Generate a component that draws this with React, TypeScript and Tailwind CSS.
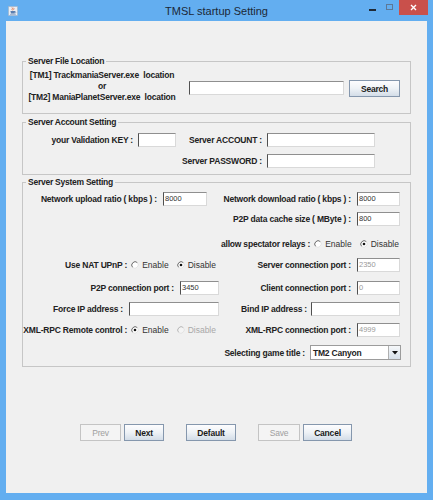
import React from "react";

const LBLBASE = "text-[8.5px] font-bold tracking-[-0.2px] text-[#222] whitespace-nowrap";
const LBL = `${LBLBASE} leading-[12px]`;

function TextField({ className = "", value = "", dim = false }: { className?: string; value?: string; dim?: boolean }) {
  return (
    <div
      className={`h-[14px] shrink-0 bg-white border border-t-[#8f8f8f] border-l-[#505050] border-r-[#d9d9d9] border-b-[#d9d9d9] pl-[1px] pt-[1px] text-[7.5px] leading-[9px] ${
        dim ? "text-[#9a9a9a]" : "text-[#333]"
      } ${className}`}
    >
      {value}
    </div>
  );
}

function Radio({ checked = false, disabled = false }: { checked?: boolean; disabled?: boolean }) {
  return (
    <svg width="8" height="8" viewBox="0 0 8 8" className="shrink-0">
      <circle cx="4" cy="4" r="3.4" fill={disabled ? "#f4f4f4" : "#ffffff"} />
      <path d="M1.6 6.4 A3.4 3.4 0 0 1 6.4 1.6" stroke={disabled ? "#b5b5b5" : "#6a6a6a"} strokeWidth="1" fill="none" />
      <path d="M6.4 1.6 A3.4 3.4 0 0 1 1.6 6.4" stroke="#e2e2e2" strokeWidth="1" fill="none" />
      {checked && <circle cx="4" cy="4" r="1.3" fill="#111" />}
    </svg>
  );
}

function RadioPair({ first, secondDisabled = false }: { first: boolean; secondDisabled?: boolean }) {
  return (
    <div className="flex items-center ml-[4px]">
      <Radio checked={first} />
      <span className="ml-[3px] text-[8.5px] leading-[12px] text-[#333]">Enable</span>
      <span className="ml-[8px] flex items-center">
        <Radio checked={!first} disabled={secondDisabled} />
      </span>
      <span className={`ml-[3px] text-[8.5px] leading-[12px] ${secondDisabled ? "text-[#a8a8a8]" : "text-[#333]"}`}>Disable</span>
    </div>
  );
}

function Btn({ children, className = "", disabled = false }: { children: React.ReactNode; className?: string; disabled?: boolean }) {
  return (
    <div
      className={`h-[17px] shrink-0 flex items-center justify-center border text-[8.5px] leading-[12px] tracking-[-0.2px] ${
        disabled
          ? "border-[#c4c4c4] bg-[#f4f4f4] text-[#a0a0a0]"
          : "border-[#8597ad] bg-linear-to-b from-[#fdfdfe] via-[#eef2f6] to-[#d3dde8] text-[#1a1a1a] font-bold"
      } ${className}`}
    >
      {children}
    </div>
  );
}

function Legend({ children }: { children: React.ReactNode }) {
  return (
    <legend className="ml-[3px] px-[2px] text-[8.5px] font-bold tracking-[-0.25px] leading-[12px] text-[#222]">{children}</legend>
  );
}

function SysRow({
  mt,
  left,
  right,
  leftPad = "pr-[3px]",
  rightPad = "pr-[10px]",
  h = "h-[14px]",
}: {
  mt: string;
  left?: React.ReactNode;
  right?: React.ReactNode;
  leftPad?: string;
  rightPad?: string;
  h?: string;
}) {
  return (
    <div className={`flex ${h} ${mt}`}>
      <div className={`w-[199px] flex justify-end items-center ${leftPad}`}>{left}</div>
      <div className={`w-[188px] flex justify-end items-center ${rightPad}`}>{right}</div>
    </div>
  );
}

function JavaIcon() {
  return (
    <svg width="10" height="10" viewBox="0 0 10 10">
      <rect x="0.5" y="0.5" width="9" height="9" fill="#e9eef4" stroke="#9fb3c8" strokeWidth="0.6" />
      <path d="M4 1.5 C5.5 2.5 3 3.3 4.6 4.4" stroke="#e0602a" strokeWidth="0.8" fill="none" />
      <path d="M5.6 1.8 C6.6 2.6 5 3.2 6 4" stroke="#e0602a" strokeWidth="0.7" fill="none" />
      <path d="M2.4 5 L7.2 5 L6.6 7.6 L3 7.6 Z" fill="#5a7fb0" />
      <path d="M7.2 5.6 C8.4 5.6 8.2 7 6.8 7" stroke="#5a7fb0" strokeWidth="0.6" fill="none" />
      <path d="M2 8.3 L7.8 8.3" stroke="#5a7fb0" strokeWidth="0.6" />
    </svg>
  );
}

export default function App() {
  return (
    <div className="w-[433px] h-[500px] bg-[#63aef0] flex flex-col font-['Liberation_Sans',Arial,sans-serif]">
      {/* title bar */}
      <div className="h-[21px] shrink-0 grid grid-cols-[1fr_auto_1fr]">
        <div className="flex items-start pl-[8px] pt-[6px]">
          <JavaIcon />
        </div>
        <div className="pt-[4px] text-[11px] leading-[14px] text-[#1c2836]">TMSL startup Setting</div>
        <div className="flex items-start justify-end pr-[5px]">
          <div className="mt-[9px] w-[7px] h-[2px] bg-[#1f2a36]" />
          <div className="ml-[10px] mt-[4px] w-[7px] h-[6px] border border-[#5d7896]" />
          <div className="ml-[6px] w-[29px] h-[15px] bg-[#c9504b] flex items-center justify-center">
            <svg width="7" height="7" viewBox="0 0 7 7">
              <path d="M1 1 L6 6 M6 1 L1 6" stroke="#ffffff" strokeWidth="1.4" />
            </svg>
          </div>
        </div>
      </div>

      {/* content */}
      <div className="ml-[6px] w-[421px] h-[472px] shrink-0 bg-[#f0f0f0] flex flex-col">
        {/* Server File Location */}
        <fieldset className="ml-[16px] w-[389px] mt-[34px] border border-[#c6c6c6] pb-[7px]">
          <Legend>Server File Location</Legend>
          <div className="flex items-start mt-[3px]">
            <div className={`ml-[5px] w-[148px] h-[36px] flex flex-col items-center ${LBLBASE} leading-[11px]`}>
              <div>[TM1] TrackmaniaServer.exe&nbsp; location</div>
              <div>or</div>
              <div>[TM2] ManiaPlanetServer.exe&nbsp; location</div>
            </div>
            <TextField className="ml-[13px] mt-[11px] w-[155px]" />
            <Btn className="ml-[5px] mt-[10px] w-[51px]">Search</Btn>
          </div>
        </fieldset>

        {/* Server Account Setting */}
        <fieldset className="ml-[16px] w-[389px] mt-[2px] border border-[#c6c6c6] pb-[6px]">
          <Legend>Server Account Setting</Legend>
          <div className="flex items-center h-[14px] mt-[5px]">
            <div className={`w-[110px] flex justify-end ${LBL}`}>your Validation KEY :</div>
            <TextField className="ml-[5px] w-[38px]" />
            <div className={`w-[86px] flex justify-end ${LBL}`}>Server ACCOUNT :</div>
            <TextField className="ml-[5px] w-[108px]" />
          </div>
          <div className="flex items-center h-[14px] mt-[7px]">
            <div className={`w-[239px] flex justify-end ${LBL}`}>Server PASSWORD :</div>
            <TextField className="ml-[5px] w-[108px]" />
          </div>
        </fieldset>

        {/* Server System Setting */}
        <fieldset className="ml-[16px] w-[389px] mt-[1px] border border-[#c6c6c6] pb-[6px]">
          <Legend>Server System Setting</Legend>
          <SysRow
            mt="mt-[4px]"
            leftPad="pr-[15px]"
            left={
              <>
                <span className={LBL}>Network upload ratio ( kbps ) :</span>
                <TextField className="ml-[6px] w-[44px]" value="8000" />
              </>
            }
            right={
              <>
                <span className={LBL}>Network download ratio ( kbps ) :</span>
                <TextField className="ml-[6px] w-[43px]" value="8000" />
              </>
            }
          />
          <SysRow
            mt="mt-[6px]"
            right={
              <>
                <span className={LBL}>P2P data cache size ( MByte ) :</span>
                <TextField className="ml-[6px] w-[43px]" value="800" />
              </>
            }
          />
          <SysRow
            mt="mt-[11px]"
            rightPad="pr-[11px]"
            right={
              <>
                <span className={LBL}>allow spectator relays :</span>
                <RadioPair first={false} />
              </>
            }
          />
          <SysRow
            mt="mt-[7px]"
            leftPad="pr-[6px]"
            left={
              <>
                <span className={LBL}>Use NAT UPnP :</span>
                <RadioPair first={false} />
              </>
            }
            right={
              <>
                <span className={LBL}>Server connection port :</span>
                <TextField className="ml-[6px] w-[43px]" value="2350" dim />
              </>
            }
          />
          <SysRow
            mt="mt-[9px]"
            left={
              <>
                <span className={LBL}>P2P connection port :</span>
                <TextField className="ml-[6px] w-[39px]" value="3450" />
              </>
            }
            right={
              <>
                <span className={LBL}>Client connection port :</span>
                <TextField className="ml-[6px] w-[43px]" value="0" dim />
              </>
            }
          />
          <SysRow
            mt="mt-[7px]"
            left={
              <>
                <span className={LBL}>Force IP address :</span>
                <TextField className="ml-[6px] w-[90px]" />
              </>
            }
            right={
              <>
                <span className={LBL}>Bind IP address :</span>
                <TextField className="ml-[4px] w-[89px]" />
              </>
            }
          />
          <SysRow
            mt="mt-[7px]"
            leftPad="pr-[6px]"
            left={
              <>
                <span className={LBL}>XML-RPC Remote control :</span>
                <RadioPair first={true} secondDisabled />
              </>
            }
            right={
              <>
                <span className={LBL}>XML-RPC connection port :</span>
                <TextField className="ml-[6px] w-[43px]" value="4999" dim />
              </>
            }
          />
          <SysRow
            mt="mt-[8px]"
            h="h-[15px]"
            rightPad="pr-[9px]"
            right={
              <>
                <span className={LBL}>Selecting game title :</span>
                <div className="ml-[5px] w-[91px] h-[15px] flex border border-[#9c9c9c] bg-white">
                  <div className={`flex-1 pl-[2px] flex items-center ${LBL}`}>TM2 Canyon</div>
                  <div className="w-[12px] h-full border-l border-[#b0b0b0] bg-linear-to-b from-[#f6f8fa] to-[#d6e0ea] flex items-center justify-center">
                    <svg width="6" height="4" viewBox="0 0 6 4">
                      <path d="M0 0 L6 0 L3 3.5 Z" fill="#111" />
                    </svg>
                  </div>
                </div>
              </>
            }
          />
        </fieldset>

        {/* buttons */}
        <div className="flex mt-[57px] ml-[74px]">
          <Btn disabled className="w-[41px]">Prev</Btn>
          <Btn className="ml-[3px] w-[40px]">Next</Btn>
          <Btn className="ml-[22px] w-[50px]">Default</Btn>
          <Btn disabled className="ml-[22px] w-[42px]">Save</Btn>
          <Btn className="ml-[3px] w-[49px]">Cancel</Btn>
        </div>
      </div>
    </div>
  );
}
